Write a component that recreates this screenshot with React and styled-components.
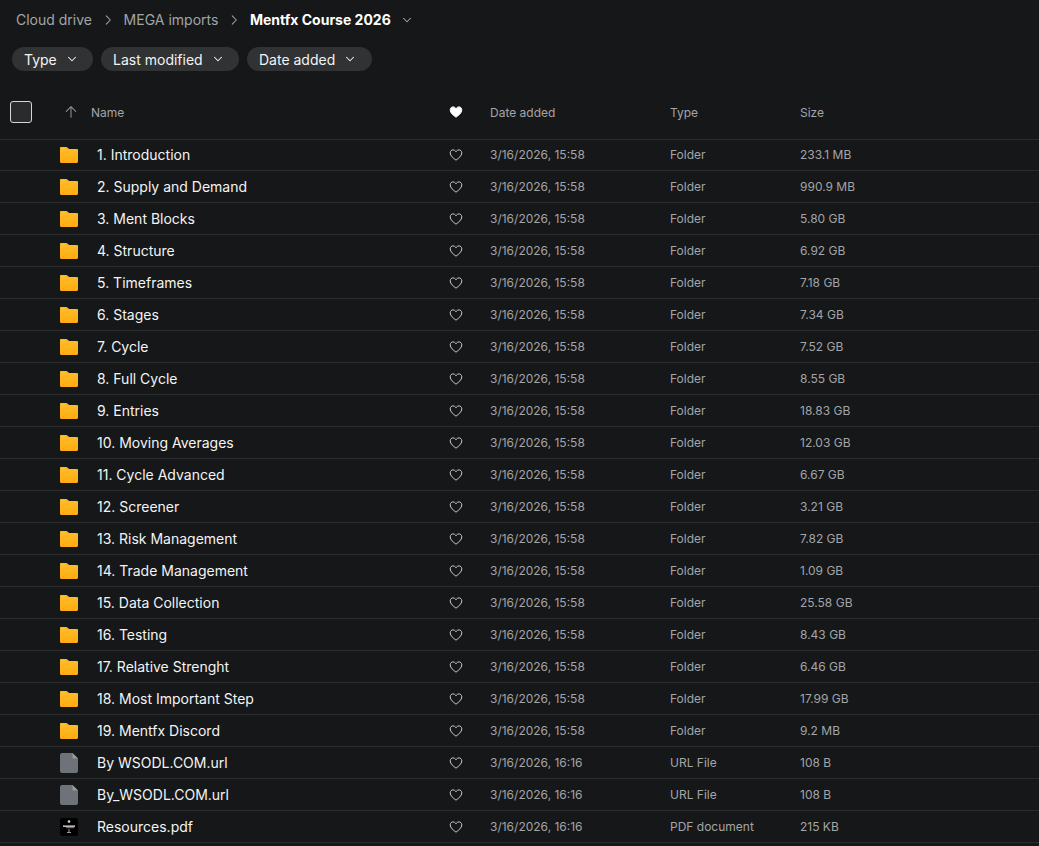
import React from 'react';
import styled, { createGlobalStyle } from 'styled-components';

const Global = createGlobalStyle`
  html, body {
    margin: 0;
    background: #161718;
    height: 100%;
    overflow: hidden;
  }
  body {
    font-family: Inter, "Liberation Sans", sans-serif;
  }
`;

const Page = styled.div`
  width: 1039px;
  height: 846px;
  overflow: hidden;
  background: #161718;
`;

const Crumbs = styled.div`
  display: flex;
  align-items: center;
  height: 24px;
  padding: 8px 0 0 16px;
`;

const Crumb = styled.span`
  font-size: 14px;
  line-height: 24px;
  color: ${props => (props.current ? '#fff' : '#a3a5a8')};
  font-weight: ${props => (props.current ? 700 : 400)};
`;

const CrumbSep = styled.span`
  display: flex;
  width: 31.6px;
  justify-content: center;
  color: #a3a5a8;
`;

const Filters = styled.div`
  display: flex;
  gap: 8px;
  padding: 15px 0 0 12px;
`;

const Pill = styled.div`
  display: flex;
  align-items: center;
  gap: 8px;
  height: 24px;
  padding: 0 14.3px 0 12px;
  border-radius: 12px;
  background: #303233;
  color: #f3f4f4;
  font-size: 14px;
`;

const Row = styled.div`
  display: grid;
  grid-template-columns: 60px 37px 352px 41px 180px 130px 1fr;
  align-items: center;
  box-sizing: border-box;
  height: ${props => (props.first ? 31 : 32)}px;
  padding-bottom: ${props => (props.first ? 1 : 0)}px;
  border-bottom: 1px solid #2a2c2d;
`;

const HeadRow = styled(Row)`
  height: 50px;
  margin-top: 19px;
  padding-bottom: 5px;
  grid-template-columns: 60px 31px 358px 41px 180px 130px 1fr;
`;

const Checkbox = styled.div`
  box-sizing: border-box;
  width: 22px;
  height: 22px;
  margin-left: 10px;
  border: 1px solid #d5d6d7;
  border-radius: 3px;
  background: #2a2b2c;
`;

const SortIcon = styled.span`
  display: flex;
  padding-left: 3px;
  color: #8c8f94;
`;

const HeadLabel = styled.span`
  font-size: 12px;
  color: #a3a5a8;
`;

const IconCell = styled.span`
  display: flex;
`;

const FileName = styled.span`
  font-size: 14px;
  color: #f3f4f4;
  white-space: nowrap;
`;

const Meta = styled.span`
  font-size: 12px;
  color: #a3a5a8;
  white-space: nowrap;
`;

const HeartCell = styled.span`
  display: flex;
  color: #c9cacc;
`;

const Chevron = () => (
  <svg width="14" height="14" viewBox="0 0 24 24" fill="none" stroke="currentColor" strokeWidth="1.8" strokeLinecap="round" strokeLinejoin="round">
    <path d="m6 9 6 6 6-6" />
  </svg>
);

const ChevronRight = () => (
  <svg width="14" height="14" viewBox="0 0 24 24" fill="none" stroke="currentColor" strokeWidth="1.8" strokeLinecap="round" strokeLinejoin="round">
    <path d="m9 5 7 7-7 7" />
  </svg>
);

const Heart = ({ filled }) => (
  <svg width="14" height="14" viewBox="0 0 14 14" fill={filled ? '#fff' : 'none'} stroke={filled ? '#fff' : 'currentColor'} strokeWidth="1" strokeLinejoin="round">
    <path d="M7 12.200C4.700 10.400 1.200 8 1.200 4.900 1.200 3 2.500 1.900 4.100 1.900c1.200 0 2.300.7 2.900 1.800.6-1.100 1.700-1.800 2.900-1.800 1.600 0 2.900 1.100 2.900 3 0 3.100-3.500 5.500-5.800 7.300Z" />
  </svg>
);

const FolderIcon = () => (
  <svg width="18" height="16" viewBox="0 0 18 16">
    <defs>
      <linearGradient id="folderFill" x1="0" y1="0" x2="0" y2="1">
        <stop offset="0" stopColor="#ffbe2a" />
        <stop offset="1" stopColor="#ffab12" />
      </linearGradient>
    </defs>
    <path d="M1.200 0h5c.5 0 .8.2 1.100.5L9 2h7.800c.7 0 1.200.5 1.200 1.200v11.600c0 .7-.5 1.200-1.200 1.200H1.200C.5 16 0 15.500 0 14.800V1.200C0 .5.500 0 1.200 0Z" fill="url(#folderFill)" />
  </svg>
);

const DocIcon = () => (
  <svg width="18" height="20" viewBox="0 0 18 20">
    <path d="M2 0h10.500L18 5.500V18c0 1.100-.9 2-2 2H2c-1.100 0-2-.9-2-2V2C0 .9.900 0 2 0Z" fill="#6e7279" />
    <path d="M12.500 0 18 5.500h-4.300c-.7 0-1.200-.5-1.200-1.200V0Z" fill="#989ba1" />
  </svg>
);

const PdfIcon = () => (
  <svg width="18" height="18" viewBox="0 0 18 18">
    <rect width="18" height="18" rx="2.500" fill="#000" />
    <circle cx="9" cy="3.500" r="1.300" fill="#d8d8d8" />
    <rect x="3" y="7.500" width="12" height="1.300" fill="#e8e8e8" />
    <rect x="6" y="9" width="8" height="1.200" fill="#b04a7c" />
    <rect x="8.500" y="11" width="1" height="3.500" fill="#9a9a9a" />
    <rect x="7" y="14" width="4" height="1" fill="#9a9a9a" />
  </svg>
);

const FOLDER_TIME = '3/16/2026, 15:58';
const FILE_TIME = '3/16/2026, 16:16';

const items = [
  { name: '1. Introduction', size: '233.1 MB' },
  { name: '2. Supply and Demand', size: '990.9 MB' },
  { name: '3. Ment Blocks', size: '5.80 GB' },
  { name: '4. Structure', size: '6.92 GB' },
  { name: '5. Timeframes', size: '7.18 GB' },
  { name: '6. Stages', size: '7.34 GB' },
  { name: '7. Cycle', size: '7.52 GB' },
  { name: '8. Full Cycle', size: '8.55 GB' },
  { name: '9. Entries', size: '18.83 GB' },
  { name: '10. Moving Averages', size: '12.03 GB' },
  { name: '11. Cycle Advanced', size: '6.67 GB' },
  { name: '12. Screener', size: '3.21 GB' },
  { name: '13. Risk Management', size: '7.82 GB' },
  { name: '14. Trade Management', size: '1.09 GB' },
  { name: '15. Data Collection', size: '25.58 GB' },
  { name: '16. Testing', size: '8.43 GB' },
  { name: '17. Relative Strenght', size: '6.46 GB' },
  { name: '18. Most Important Step', size: '17.99 GB' },
  { name: '19. Mentfx Discord', size: '9.2 MB' },
  { name: 'By WSODL.COM.url', size: '108 B', kind: 'URL File', icon: 'doc' },
  { name: 'By_WSODL.COM.url', size: '108 B', kind: 'URL File', icon: 'doc' },
  { name: 'Resources.pdf', size: '215 KB', kind: 'PDF document', icon: 'pdf' },
];

const icons = { doc: <DocIcon />, pdf: <PdfIcon /> };

const App = () => (
  <Page>
    <Global />
    <Crumbs>
      <Crumb>Cloud drive</Crumb>
      <CrumbSep><ChevronRight /></CrumbSep>
      <Crumb>MEGA imports</Crumb>
      <CrumbSep><ChevronRight /></CrumbSep>
      <Crumb current>Mentfx Course 2026</Crumb>
      <CrumbSep><Chevron /></CrumbSep>
    </Crumbs>
    <Filters>
      <Pill>Type <Chevron /></Pill>
      <Pill>Last modified <Chevron /></Pill>
      <Pill>Date added <Chevron /></Pill>
    </Filters>
    <HeadRow>
      <Checkbox />
      <SortIcon>
        <svg width="16" height="16" viewBox="0 0 24 24" fill="none" stroke="currentColor" strokeWidth="1.6" strokeLinecap="round" strokeLinejoin="round">
          <path d="M12 20V4M5 11l7-7 7 7" />
        </svg>
      </SortIcon>
      <HeadLabel>Name</HeadLabel>
      <HeartCell><Heart filled /></HeartCell>
      <HeadLabel>Date added</HeadLabel>
      <HeadLabel>Type</HeadLabel>
      <HeadLabel>Size</HeadLabel>
    </HeadRow>
    {items.map((item, i) => (
      <Row key={item.name} first={i === 0}>
        <span />
        <IconCell>{icons[item.icon] || <FolderIcon />}</IconCell>
        <FileName>{item.name}</FileName>
        <HeartCell><Heart /></HeartCell>
        <Meta>{item.icon ? FILE_TIME : FOLDER_TIME}</Meta>
        <Meta>{item.kind || 'Folder'}</Meta>
        <Meta>{item.size}</Meta>
      </Row>
    ))}
  </Page>
);

export default App;
